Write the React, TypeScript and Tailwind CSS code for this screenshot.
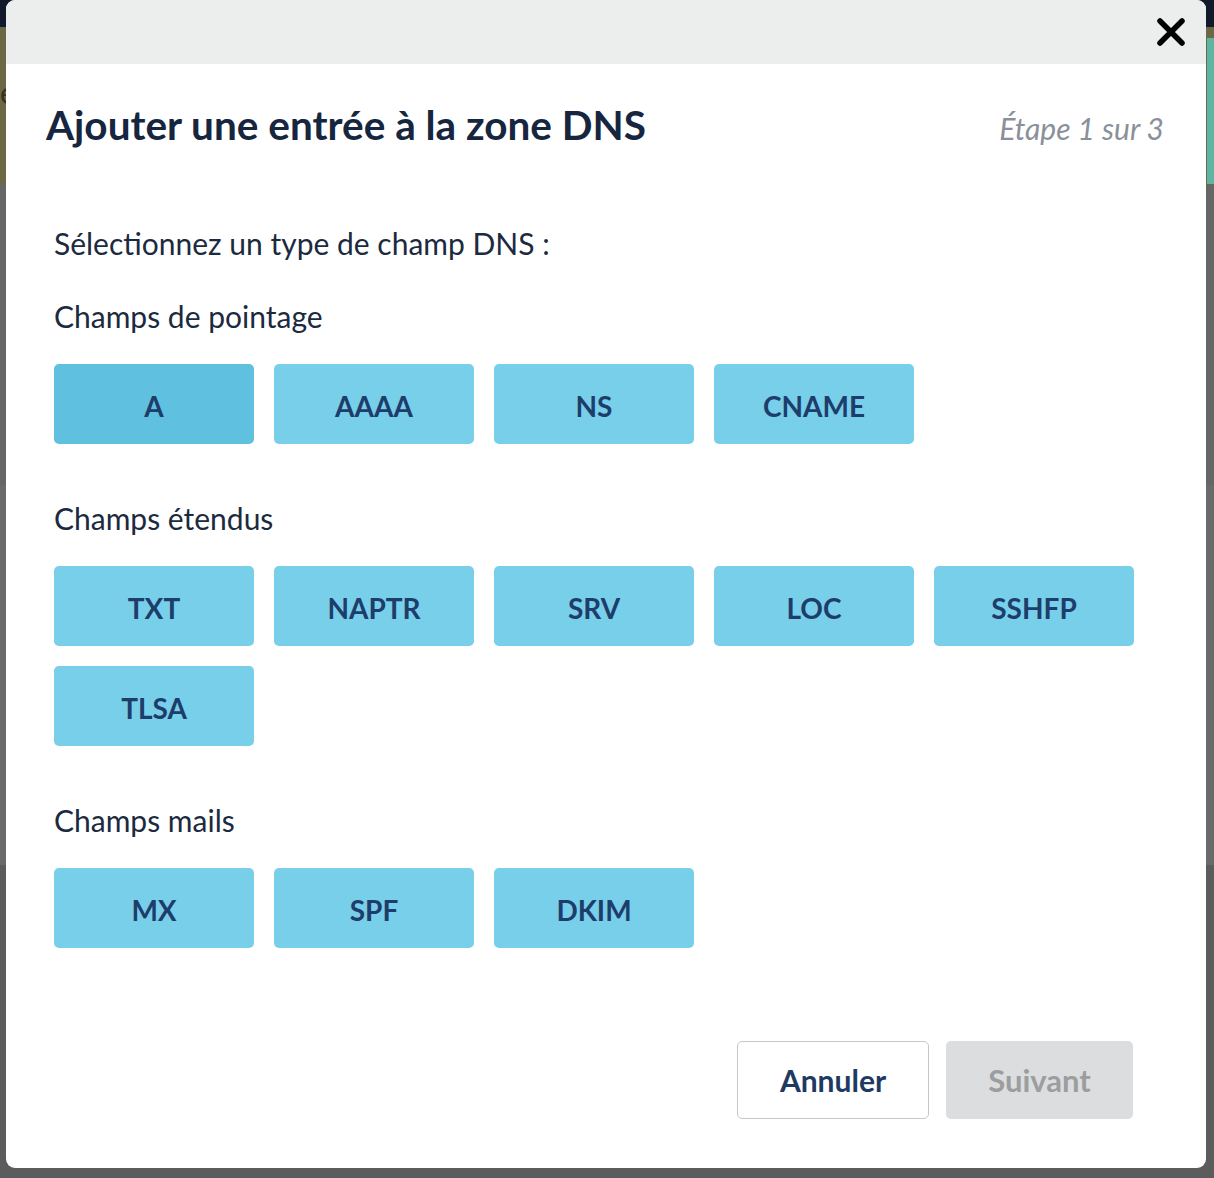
import React from "react";

const FONT = { fontFamily: "Lato, 'Noto Sans', sans-serif" };

function TypeButton({ label, active }: { label: string; active?: boolean }) {
  return (
    <button
      className={
        "h-[80px] w-[200px] rounded-[5px] pt-[3px] text-[28px] font-bold leading-none text-[#1d3d6a] " +
        (active ? "bg-[#5fc1df]" : "bg-[#78cfea]")
      }
    >
      {label}
    </button>
  );
}

function SectionLabel({ children, mt }: { children: React.ReactNode; mt: string }) {
  return <div className={"text-[30px] leading-[30px] text-[#1c2a40] " + mt}>{children}</div>;
}

export default function App() {
  return (
    <div className="relative h-[1178px] w-[1214px] overflow-hidden bg-[#5a5a5a]" style={FONT}>
      {/* page content under overlay */}
      <div className="h-[27px] bg-[#111a2b]" />
      <div className="flex h-[158px] justify-between bg-[#6b6846]">
        <div className="flex w-[6px] flex-col gap-[40px] pt-[50px] text-[30px] leading-none text-[#3a2f1c]">
          <span>e</span>
        </div>
        <div className="mt-[11px] h-[146px] w-[7px] bg-[#5db6a3]" />
      </div>
      <div className="h-[300px] bg-[#666666]" />
      <div className="h-[380px] bg-[#6a6a6a]" />
      <div className="h-[313px] bg-[#5c5c5c]" />

      {/* modal */}
      <div className="absolute left-[6px] top-0 flex h-[1168px] w-[1200px] flex-col overflow-hidden rounded-[9px] bg-white">
        <div className="flex h-[64px] shrink-0 items-center justify-end bg-[#eceeed] pr-[20px]">
          <svg width="30" height="30" viewBox="0 0 30 30">
            <path d="M4 4 L26 26 M26 4 L4 26" stroke="#000" strokeWidth="5.5" strokeLinecap="round" />
          </svg>
        </div>

        <div className="mt-[41px] flex items-baseline justify-between pl-[40px] pr-[42px]">
          <h1 className="text-[40.5px] font-bold leading-[40px] text-[#17263f]">
            Ajouter une entrée à la zone DNS
          </h1>
          <span className="text-[30px] italic leading-[30px] text-[#8a9099]">Étape 1 sur 3</span>
        </div>

        <div className="flex flex-col px-[48px]">
          <SectionLabel mt="mt-[83px]">Sélectionnez un type de champ DNS :</SectionLabel>
          <SectionLabel mt="mt-[43px]">Champs de pointage</SectionLabel>
          <div className="mt-[33px] flex gap-[20px]">
            <TypeButton label="A" active />
            <TypeButton label="AAAA" />
            <TypeButton label="NS" />
            <TypeButton label="CNAME" />
          </div>
          <SectionLabel mt="mt-[59px]">Champs étendus</SectionLabel>
          <div className="mt-[33px] grid grid-cols-[repeat(5,200px)] gap-[20px]">
            <TypeButton label="TXT" />
            <TypeButton label="NAPTR" />
            <TypeButton label="SRV" />
            <TypeButton label="LOC" />
            <TypeButton label="SSHFP" />
            <TypeButton label="TLSA" />
          </div>
          <SectionLabel mt="mt-[59px]">Champs mails</SectionLabel>
          <div className="mt-[33px] flex gap-[20px]">
            <TypeButton label="MX" />
            <TypeButton label="SPF" />
            <TypeButton label="DKIM" />
          </div>
        </div>

        <div className="mt-[93px] flex justify-end gap-[17px] pr-[73px]">
          <button className="h-[78px] w-[192px] rounded-[5px] border border-[#c4c6c8] bg-white text-[30px] font-bold leading-none text-[#1e3a63]">
            Annuler
          </button>
          <button className="h-[78px] w-[187px] rounded-[5px] bg-[#dcdddf] text-[31px] font-bold leading-none text-[#9c9d9f]">
            Suivant
          </button>
        </div>
      </div>
    </div>
  );
}
